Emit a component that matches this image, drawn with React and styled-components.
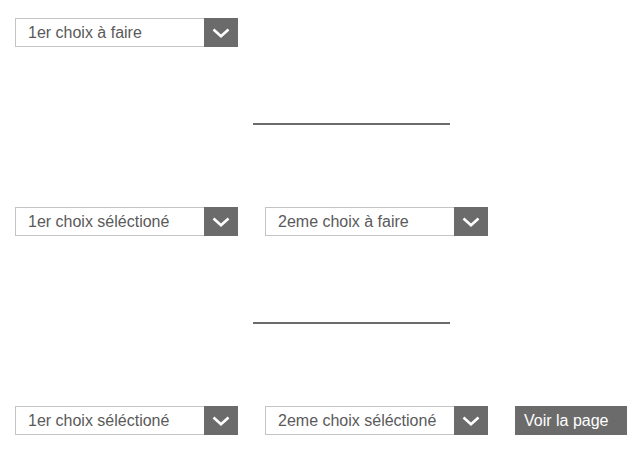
import React from "react";
import styled, { createGlobalStyle } from "styled-components";

const GlobalStyle = createGlobalStyle`
    body {
        margin: 0;
        background: #ffffff;
        font-family: "Liberation Sans", Arial, sans-serif;
    }
`;

const Page = styled.main`
    width: 640px;
    height: 460px;
    box-sizing: border-box;
    padding: 18px 0 0 15px;
    display: flex;
    flex-direction: column;
`;

const Row = styled.div`
    display: flex;
    align-items: flex-start;
    gap: 27px;
`;

const Divider = styled.hr`
    width: 197px;
    height: 2px;
    border: 0;
    margin: ${(p) => p.$top}px 0 ${(p) => p.$bottom}px 238px;
    background-color: #6b6b6b;
`;

const SelectBox = styled.div`
    width: 223px;
    height: 29px;
    box-sizing: border-box;
    border: 1px solid #c4c4c4;
    border-right: 0;
    display: flex;
    align-items: stretch;
    background: #ffffff;
`;

const SelectLabel = styled.span`
    flex: 1;
    padding-left: 12px;
    display: flex;
    align-items: center;
    font-size: 16px;
    color: #5a5a5a;
    white-space: nowrap;
`;

const Toggle = styled.span`
    width: 34px;
    margin: -1px 0;
    background-color: #6b6b6b;
    display: flex;
    align-items: center;
    justify-content: center;
`;

const ActionButton = styled.button`
    width: 112px;
    height: 29px;
    border: 0;
    padding: 0 0 0 9px;
    text-align: left;
    background-color: #6b6b6b;
    color: #ffffff;
    font-family: "Liberation Sans", Arial, sans-serif;
    font-size: 16px;
    cursor: pointer;
`;

function Chevron() {
    return (
        <svg width="18" height="10" viewBox="0 0 18 10">
            <polyline
                points="1.5,1.5 9,8.2 16.5,1.5"
                fill="none"
                stroke="#ffffff"
                strokeWidth="2.6"
            />
        </svg>
    );
}

function Select({ label }) {
    return (
        <SelectBox>
            <SelectLabel>{label}</SelectLabel>
            <Toggle>
                <Chevron />
            </Toggle>
        </SelectBox>
    );
}

export default function App() {
    return (
        <>
            <GlobalStyle />
            <Page>
                <Row>
                    <Select label="1er choix à faire" />
                </Row>
                <Divider $top={76} $bottom={82} />
                <Row>
                    <Select label="1er choix séléctioné" />
                    <Select label="2eme choix à faire" />
                </Row>
                <Divider $top={86} $bottom={82} />
                <Row>
                    <Select label="1er choix séléctioné" />
                    <Select label="2eme choix séléctioné" />
                    <ActionButton>Voir la page</ActionButton>
                </Row>
            </Page>
        </>
    );
}
